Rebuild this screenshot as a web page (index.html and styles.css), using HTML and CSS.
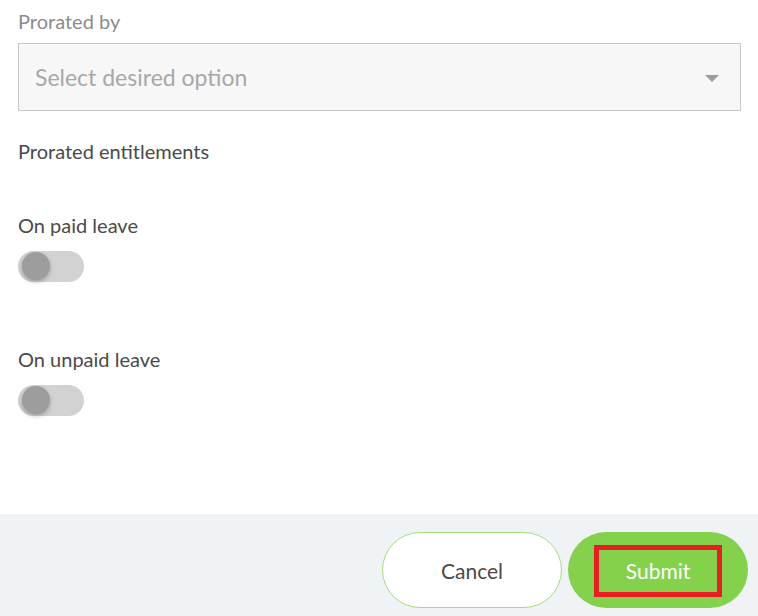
FILE: index.html
```html
<!DOCTYPE html>
<html lang="en">
<head>
<meta charset="utf-8">
<title>Prorated</title>
<link rel="stylesheet" href="styles.css">
</head>
<body>
<main class="form">
  <div class="field">
    <div class="label label-muted">Prorated by</div>
    <div class="select">
      <span class="placeholder">Select desired option</span>
      <span class="caret"></span>
    </div>
  </div>
  <div class="section-title">Prorated entitlements</div>
  <div class="switch-row">
    <div class="label">On paid leave</div>
    <div class="switch"><span class="knob"></span></div>
  </div>
  <div class="switch-row switch-row-2">
    <div class="label">On unpaid leave</div>
    <div class="switch"><span class="knob"></span></div>
  </div>
</main>
<footer class="footer">
  <button class="btn btn-cancel">Cancel</button>
  <button class="btn btn-submit"><span class="focus-box">Submit</span></button>
</footer>
</body>
</html>
```
FILE: styles.css
```css
* { box-sizing: border-box; }
html, body { margin: 0; height: 100%; }
body {
  display: flex;
  flex-direction: column;
  min-height: 616px;
  background: #fff;
  font-family: Lato, "Open Sans", sans-serif;
  color: #4a4a4a;
}
.form {
  padding: 7px 17px 0 18px;
  flex: 1;
}
.label {
  font-size: 20px;
  line-height: 28px;
  color: #4a4a4a;
}
.label-muted { color: #8c8c8c; }
.select {
  margin-top: 8px;
  height: 68px;
  background: #f7f7f7;
  border: 1px solid #c8c8c8;
  display: flex;
  align-items: center;
  justify-content: space-between;
  padding: 0 21px 0 16px;
}
.placeholder {
  font-size: 23px;
  color: #a8a8a8;
}
.caret {
  width: 0; height: 0;
  border-left: 7px solid transparent;
  border-right: 7px solid transparent;
  border-top: 7px solid #9e9e9e;
  margin-top: 3px;
}
.section-title {
  margin-top: 26px;
  font-size: 20px;
  line-height: 28px;
}
.switch-row { margin-top: 46px; }
.switch-row-2 { margin-top: 63px; }
.switch {
  position: relative;
  margin-top: 12px;
  width: 66px;
  height: 31px;
  border-radius: 16px;
  background: #d2d2d2;
}
.knob {
  position: absolute;
  left: 4px;
  top: 1px;
  width: 28px;
  height: 28px;
  border-radius: 50%;
  background: #9d9d9d;
  box-shadow: 0 2px 4px rgba(0,0,0,0.25);
}
.footer {
  height: 102px;
  background: #eff3f6;
  display: flex;
  justify-content: flex-end;
  align-items: flex-start;
  gap: 6px;
  padding: 18px 10px 0 0;
}
.btn {
  width: 180px;
  height: 76px;
  border-radius: 38px;
  font-family: inherit;
  font-size: 21px;
  display: flex;
  align-items: center;
  justify-content: center;
  cursor: pointer;
}
.btn-cancel {
  background: #fff;
  border: 1px solid #a5dc79;
  color: #4a4a4a;
}
.btn-submit {
  background: #84d24b;
  border: none;
  color: #fff;
}
.focus-box {
  width: 128px;
  height: 52px;
  border: 5px solid #ec1c24;
  display: flex;
  align-items: center;
  justify-content: center;
  margin-top: 1px;
}
```
